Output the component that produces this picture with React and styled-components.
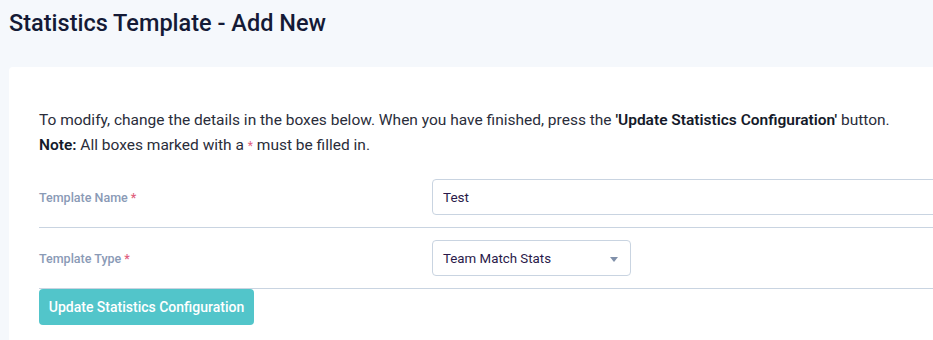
import React from "react";
import styled, { createGlobalStyle } from "styled-components";

const GlobalStyle = createGlobalStyle`
  html, body {
    margin: 0;
    padding: 0;
    background: #f5f8fc;
  }
  body {
    font-family: Roboto, "Liberation Sans", sans-serif;
    overflow: hidden;
  }
`;

const Page = styled.div`
  width: 933px;
  height: 340px;
  overflow: hidden;
  background: #f5f8fc;
  padding: 0 0 0 9px;
  box-sizing: border-box;
`;

const Title = styled.h1`
  margin: 0;
  height: 67px;
  box-sizing: border-box;
  padding-top: 9px;
  font-size: 23.5px;
  font-weight: 500;
  color: #141a36;
  line-height: 28px;
`;

const Card = styled.div`
  width: 1000px;
  background: #ffffff;
  border-radius: 4px 0 0 0;
  padding: 41px 0 20px 30px;
  box-sizing: border-box;
  min-height: 300px;
`;

const Intro = styled.p`
  margin: 0 0 8px;
  font-size: 15.5px;
  line-height: 25px;
  color: #2a2d3a;
  b {
    font-weight: 600;
    color: #141a2a;
  }
`;

const Req = styled.span`
  color: #e0607e;
  font-size: ${(p) => (p.small ? "12px" : "inherit")};
  margin-left: ${(p) => (p.small ? "0" : "3px")};
`;

const Row = styled.div`
  display: grid;
  grid-template-columns: 393px 1fr;
  align-items: center;
  padding: 12px 0 12px;
  border-bottom: 1px solid #c9d4e1;
`;

const Label = styled.label`
  font-size: 12.5px;
  font-weight: 500;
  color: #8a9ab6;
`;

const Input = styled.input`
  height: 36px;
  box-sizing: border-box;
  border: 1px solid #c9d4e1;
  border-radius: 4px;
  padding: 0 10px;
  font-family: inherit;
  font-size: 13.5px;
  color: #2a1a4a;
  outline: none;
  width: 100%;
`;

const SelectBox = styled.div`
  position: relative;
  width: 199px;
  height: 36px;
  box-sizing: border-box;
  border: 1px solid #c9d4e1;
  border-radius: 4px;
  padding: 0 10px;
  display: flex;
  align-items: center;
  font-size: 13.3px;
  color: #2a1a4a;
`;

const Caret = styled.span`
  position: absolute;
  right: 12px;
  top: 16px;
  width: 0;
  height: 0;
  border-left: 4px solid transparent;
  border-right: 4px solid transparent;
  border-top: 5px solid #8090aa;
`;

const Button = styled.button`
  height: 36px;
  width: 215px;
  border: none;
  border-radius: 4px;
  background: #52c5ca;
  color: #ffffff;
  font-family: inherit;
  font-size: 14px;
  font-weight: 500;
  padding: 0;
  cursor: pointer;
`;

export default function App() {
  return (
    <>
      <GlobalStyle />
      <Page>
        <Title>Statistics Template - Add New</Title>
        <Card>
          <Intro>
            To modify, change the details in the boxes below. When you have finished, press the{" "}
            <b>'Update Statistics Configuration'</b> button.
            <br />
            <b>Note:</b> All boxes marked with a <Req small>*</Req> must be filled in.
          </Intro>
          <Row>
            <Label>
              Template Name<Req>*</Req>
            </Label>
            <Input defaultValue="Test" />
          </Row>
          <Row>
            <Label>
              Template Type<Req>*</Req>
            </Label>
            <SelectBox>
              Team Match Stats
              <Caret />
            </SelectBox>
          </Row>
          <Button>Update Statistics Configuration</Button>
        </Card>
      </Page>
    </>
  );
}
